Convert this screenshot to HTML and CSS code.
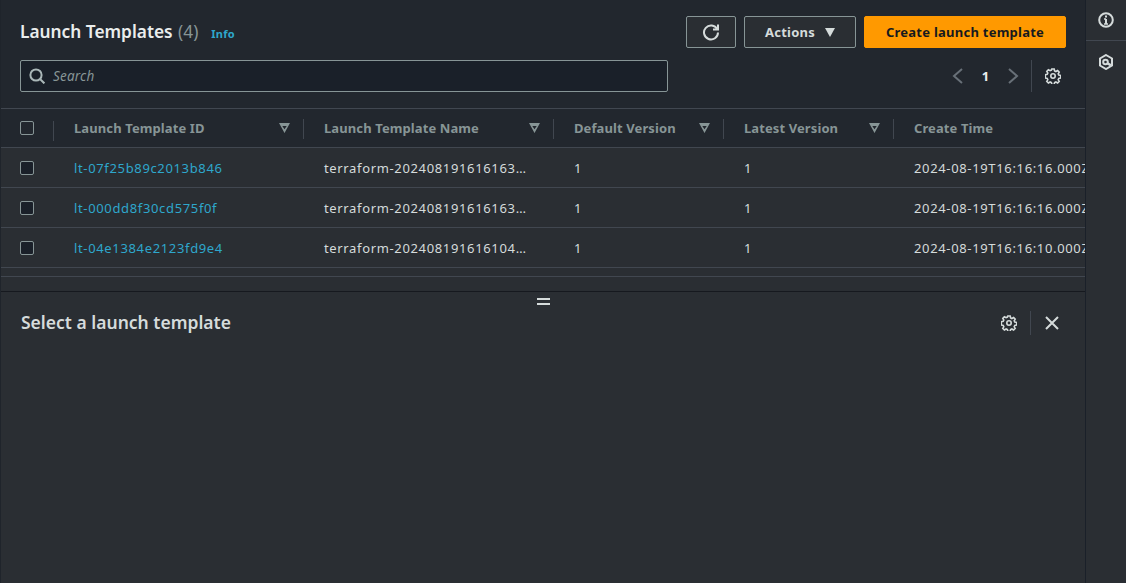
FILE: index.html
```html
<!DOCTYPE html>
<html lang="en">
<head>
    <meta charset="UTF-8">
    <meta name="viewport" content="width=device-width, initial-scale=1.0">
    <title>Launch Templates</title>
    <link rel="stylesheet" href="styles.css">
</head>
<body>
    <div class="page">
        <main class="main">
            <section class="top">
                <div class="title-row">
                    <h1>Launch Templates <span class="count">(4)</span></h1>
                    <a class="info">Info</a>
                    <div class="actions">
                        <button class="btn btn-icon" aria-label="Refresh">
                            <svg width="18" height="18" viewBox="0 0 18 18" fill="none" stroke="#d5dbdb" stroke-width="2"><path d="M15.2 6.2A7 7 0 1 0 16 9.5"/><path d="M16 1.5v5h-5"/></svg>
                        </button>
                        <button class="btn btn-actions">Actions <span class="caret"></span></button>
                        <button class="btn btn-primary">Create launch template</button>
                    </div>
                </div>
                <div class="search-row">
                    <div class="search">
                        <svg width="16" height="16" viewBox="0 0 16 16" fill="none" stroke="#aab7b8" stroke-width="2"><circle cx="7" cy="7" r="5.6"/><path d="M11 11l4.4 4.4"/></svg>
                        <span>Search</span>
                    </div>
                    <div class="pager">
                        <svg width="12" height="16" viewBox="0 0 12 16" fill="none" stroke="#687078" stroke-width="2"><path d="M10 1L2 8l8 7"/></svg>
                        <strong>1</strong>
                        <svg width="12" height="16" viewBox="0 0 12 16" fill="none" stroke="#687078" stroke-width="2"><path d="M2 1l8 7-8 7"/></svg>
                        <span class="pager-line"></span>
                        <svg width="16" height="16" viewBox="0 0 16 16" fill="none" stroke="#d5dbdb" stroke-width="1.6"><circle cx="8" cy="8" r="2.2"/><path d="M6.800 1h2.400l.4 1.900 1.300.6 1.700-1 1.600 1.700-1 1.600.6 1.300 1.900.5v2.400l-1.900.4-.6 1.400 1 1.600-1.600 1.600-1.700-1-1.300.6-.4 1.900H6.800l-.4-1.900-1.300-.6-1.700 1-1.600-1.600 1-1.600-.6-1.400-1.900-.4V6.800l1.900-.5.6-1.300-1-1.600 1.600-1.700 1.700 1 1.300-.6z"/></svg>
                    </div>
                </div>
            </section>

            <section class="table">
                <div class="row head">
                    <div class="cell check"><span class="box"></span></div>
                    <div class="cell">Launch Template ID<span class="sort"></span></div>
                    <div class="cell">Launch Template Name<span class="sort"></span></div>
                    <div class="cell">Default Version<span class="sort"></span></div>
                    <div class="cell">Latest Version<span class="sort"></span></div>
                    <div class="cell last">Create Time</div>
                </div>
                <div class="row">
                    <div class="cell check"><span class="box"></span></div>
                    <div class="cell"><a>lt-07f25b89c2013b846</a></div>
                    <div class="cell">terraform-202408191616163…</div>
                    <div class="cell">1</div>
                    <div class="cell">1</div>
                    <div class="cell last">2024-08-19T16:16:16.000Z</div>
                </div>
                <div class="row">
                    <div class="cell check"><span class="box"></span></div>
                    <div class="cell"><a>lt-000dd8f30cd575f0f</a></div>
                    <div class="cell">terraform-202408191616163…</div>
                    <div class="cell">1</div>
                    <div class="cell">1</div>
                    <div class="cell last">2024-08-19T16:16:16.000Z</div>
                </div>
                <div class="row">
                    <div class="cell check"><span class="box"></span></div>
                    <div class="cell"><a>lt-04e1384e2123fd9e4</a></div>
                    <div class="cell">terraform-202408191616104…</div>
                    <div class="cell">1</div>
                    <div class="cell">1</div>
                    <div class="cell last">2024-08-19T16:16:10.000Z</div>
                </div>
                <div class="table-foot"></div>
                <div class="table-gap"></div>
            </section>

            <section class="split">
                <div class="handle"></div>
                <div class="split-head">
                    <h2>Select a launch template</h2>
                    <div class="split-tools">
                        <svg width="16" height="16" viewBox="0 0 16 16" fill="none" stroke="#d5dbdb" stroke-width="1.6"><circle cx="8" cy="8" r="2.2"/><path d="M6.800 1h2.400l.4 1.900 1.300.6 1.700-1 1.600 1.700-1 1.600.6 1.300 1.900.5v2.400l-1.900.4-.6 1.400 1 1.600-1.600 1.600-1.700-1-1.300.6-.4 1.900H6.800l-.4-1.900-1.300-.6-1.700 1-1.600-1.600 1-1.600-.6-1.400-1.900-.4V6.800l1.900-.5.6-1.300-1-1.600 1.600-1.700 1.700 1 1.300-.6z"/></svg>
                        <span class="tools-line"></span>
                        <svg width="14" height="14" viewBox="0 0 14 14" fill="none" stroke="#d5dbdb" stroke-width="2"><path d="M1 1l12 12M13 1L1 13"/></svg>
                    </div>
                </div>
            </section>
        </main>

        <aside class="rail">
            <div class="rail-item">
                <svg width="16" height="16" viewBox="0 0 16 16" fill="none" stroke="#d5dbdb" stroke-width="2"><circle cx="8" cy="8" r="6.800"/><path d="M8 7v5M8 3.500v2"/><path d="M6 7h2M6 12h4" stroke-width="1.500"/></svg>
            </div>
            <div class="rail-item">
                <svg width="16" height="16" viewBox="0 0 16 16" fill="none" stroke="#d5dbdb" stroke-width="2"><path d="M8 1l6 3.500v7L8 15l-6-3.500v-7z"/><circle cx="7.500" cy="8" r="2.300"/><path d="M9 9l4 2.300" stroke-width="2.500"/></svg>
            </div>
        </aside>
    </div>
</body>
</html>
```

FILE: styles.css
```css
* {
    box-sizing: border-box;
}
html, body {
    margin: 0;
    height: 100%;
    overflow: hidden;
}
body {
    font-family: "Noto Sans", sans-serif;
    font-size: 13px;
    letter-spacing: 0.65px;
    color: #d5dbdb;
    background: #2a2e33;
}
.page {
    display: flex;
    height: 583px;
}
.main {
    width: 1086px;
    flex: none;
    display: flex;
    flex-direction: column;
    border-right: 1px solid #1a2029;
    border-left: 1px solid #1f242b;
    overflow: hidden;
}
.top {
    height: 109px;
    padding: 16px 19px 0 19px;
    background: #22272e;
    border-bottom: 1px solid #414750;
}
.title-row {
    display: flex;
    align-items: center;
    height: 32px;
}
h1 {
    margin: -2px 0 0;
    font-size: 17.3px;
    font-weight: 600;
    letter-spacing: 0;
    color: #eaeded;
}
.count {
    margin-left: 1px;
    font-weight: 400;
    color: #879596;
}
.info {
    margin: 3px 0 0 13px;
    font-size: 11px;
    font-weight: 700;
    letter-spacing: 0.2px;
    color: #2ea7cc;
}
.actions {
    margin-left: auto;
    display: flex;
    gap: 8px;
}
.btn {
    height: 32px;
    font-family: inherit;
    font-size: 13px;
    font-weight: 700;
    letter-spacing: 0.25px;
    border-radius: 2px;
    border: 1px solid #879596;
    background: #2a2e33;
    color: #d5dbdb;
    display: flex;
    align-items: center;
    justify-content: center;
    padding: 0;
}
.btn-icon {
    width: 50px;
}
.btn-actions {
    width: 112px;
    gap: 10px;
}
.caret {
    width: 0;
    height: 0;
    border-left: 5.5px solid transparent;
    border-right: 5.5px solid transparent;
    border-top: 9px solid #d5dbdb;
}
.btn-primary {
    width: 202px;
    background: #ff9900;
    border-color: #ff9900;
    color: #16191f;
}
.search-row {
    display: flex;
    align-items: center;
    margin-top: 12px;
}
.search {
    width: 648px;
    height: 32px;
    display: flex;
    align-items: center;
    gap: 8px;
    padding-left: 8px;
    background: #1a2029;
    border: 1px solid #879596;
    border-radius: 2px;
    font-size: 13.5px;
    letter-spacing: 0.2px;
    font-style: italic;
    color: #879596;
}
.pager {
    margin-left: auto;
    display: flex;
    align-items: center;
    height: 32px;
    padding-right: 5px;
}
.pager strong {
    width: 43px;
    text-align: center;
    font-size: 13px;
    letter-spacing: 0;
    color: #eaeded;
}
.pager-line {
    width: 1px;
    height: 32px;
    margin: 0 13px 0 12px;
    background: #414750;
}
.table {
    background: #2a2e33;
}
.row {
    display: grid;
    grid-template-columns: 53px 250px 250px 170px 170px 300px;
    height: 40px;
    border-bottom: 1px solid #414750;
    align-items: center;
}
.row.head {
    height: 39px;
    background: #22272e;
    font-size: 13px;
    font-weight: 700;
    letter-spacing: 0.1px;
    color: #879596;
}
.cell {
    position: relative;
    padding-left: 20px;
    white-space: nowrap;
}
.cell a {
    color: #2ea7cc;
}
.check {
    padding-left: 19px;
    display: flex;
}
.box {
    width: 14px;
    height: 14px;
    border: 1px solid #879596;
    border-radius: 2px;
    background: #1a2029;
}
.head .check .box {
    background: transparent;
}
.head .cell::after {
    content: "";
    position: absolute;
    right: 0;
    top: 0;
    width: 1px;
    height: 20px;
    background: #414750;
}
.head .cell.last::after {
    display: none;
}
.sort {
    position: absolute;
    right: 14px;
    top: 4px;
    width: 11px;
    height: 10px;
    background: #879596;
    clip-path: polygon(0 0, 100% 0, 50% 100%, 50% 62%, 70% 30%, 30% 30%, 50% 62%, 50% 100%);
}
.table-foot {
    height: 9px;
    border-bottom: 1px solid #414750;
}
.table-gap {
    height: 14px;
}
.split {
    flex: 1;
    position: relative;
    background: #2a2e33;
    border-top: 1px solid #16191f;
}
.handle {
    position: absolute;
    left: 536px;
    top: 6px;
    width: 13px;
    height: 7px;
    border-top: 2px solid #d5dbdb;
    border-bottom: 2px solid #d5dbdb;
}
.split-head {
    display: flex;
    align-items: center;
    justify-content: space-between;
    padding: 18px 26px 0 20px;
}
h2 {
    margin: -2px 0 0;
    font-size: 17.5px;
    font-weight: 600;
    letter-spacing: 0;
    color: #d5dbdb;
}
.split-tools {
    display: flex;
    align-items: center;
    padding-top: 1px;
}
.tools-line {
    width: 1px;
    height: 24px;
    margin: 0 14px 0 13px;
    background: #414750;
}
.rail {
    flex: 1;
    background: #2a2e33;
}
.rail-item {
    height: 41px;
    display: flex;
    align-items: center;
    justify-content: center;
}
.rail-item:first-child {
    border-bottom: 1px solid #414750;
}
```
